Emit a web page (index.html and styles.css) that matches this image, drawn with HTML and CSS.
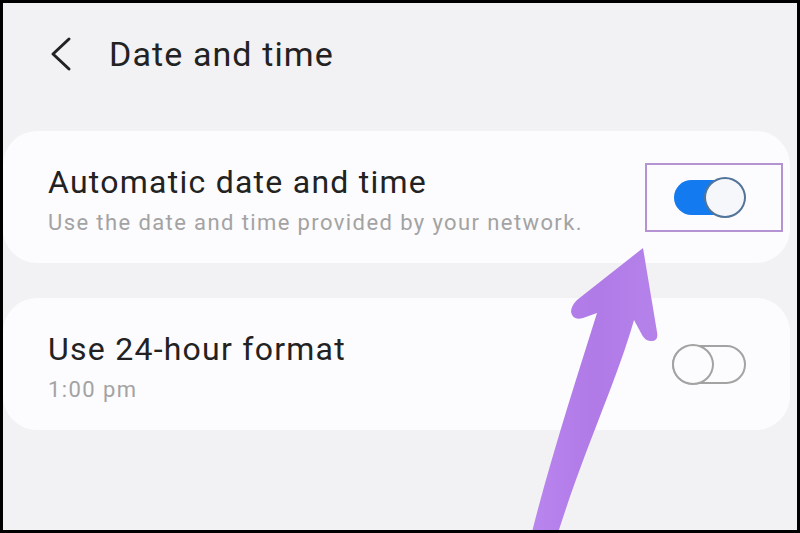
FILE: index.html
```html
<!DOCTYPE html>
<html lang="en">
<head>
    <meta charset="UTF-8">
    <meta name="viewport" content="width=device-width, initial-scale=1.0">
    <title>Date and time</title>
    <link rel="stylesheet" href="styles.css">
</head>
<body>

    <div class="frame">
        <div class="screen">

            <!-- Top bar -->
            <header class="top-bar">
                <svg class="back-icon" width="24" height="36" viewBox="0 0 24 36">
                    <polyline points="20,3 4,18 20,33" fill="none" stroke="#222" stroke-width="3" stroke-linecap="round" stroke-linejoin="round"/>
                </svg>
                <h1>Date and time</h1>
            </header>

            <!-- Settings -->
            <div class="settings">
                <div class="setting-card">
                    <div class="setting-text">
                        <h2>Automatic date and time</h2>
                        <p>Use the date and time provided by your network.</p>
                    </div>
                    <div class="switch-box highlighted">
                        <div class="switch on"></div>
                    </div>
                </div>

                <div class="setting-card">
                    <div class="setting-text">
                        <h2>Use 24-hour format</h2>
                        <p>1:00 pm</p>
                    </div>
                    <div class="switch-box">
                        <div class="switch"></div>
                    </div>
                </div>
            </div>

            <!-- Pointer arrow -->
            <svg class="pointer" width="800" height="533" viewBox="0 0 800 533">
                <defs>
                    <linearGradient id="arrow-fill" x1="0" y1="0" x2="1" y2="0">
                        <stop offset="0" stop-color="#b985ee"/>
                        <stop offset="0.5" stop-color="#b07ae7"/>
                        <stop offset="1" stop-color="#b582ea"/>
                    </linearGradient>
                </defs>
                <path d="M643 248 L657 332 Q659 342 650 341 Q644 340 641 333 L634 320 C617 380 584 450 557 536 L531 536 C550 460 576 380 597 313 L583 318 Q573 321 571 312 Q571 306 577 300 Z" fill="url(#arrow-fill)"/>
            </svg>

        </div>
    </div>

</body>
</html>
```

FILE: styles.css
```css
body {
    margin: 0;
    font-family: Roboto, "Noto Sans", Arial, sans-serif;
}

.frame {
    width: 800px;
    height: 533px;
    padding: 3px;
    box-sizing: border-box;
    background-color: #000;
}

.screen {
    position: relative;
    height: 100%;
    overflow: hidden;
    background-color: #f2f1f3;
}

.top-bar {
    display: flex;
    align-items: center;
    height: 102px;
    padding-left: 46px;
}

.back-icon {
    margin-right: 36px;
}

.top-bar h1 {
    margin: 0;
    font-size: 34px;
    font-weight: 400;
    letter-spacing: 1.1px;
    color: #222;
}

.settings {
    display: flex;
    flex-direction: column;
    gap: 35px;
    margin-top: 26px;
    padding-right: 7px;
}

.setting-card {
    display: flex;
    align-items: center;
    justify-content: space-between;
    height: 132px;
    padding: 0 7px 0 45px;
    background-color: #fcfbfd;
    border-radius: 34px;
}

.setting-text {
    padding-top: 4px;
}

.setting-text h2 {
    margin: 0;
    font-size: 32px;
    font-weight: 400;
    letter-spacing: 1.25px;
    color: #222;
}

.setting-text p {
    margin: 9px 0 0;
    font-size: 22px;
    letter-spacing: 1.4px;
    color: #a3a3a3;
}

.switch-box {
    padding: 12px 35px 12px 25px;
    border: 2px solid transparent;
}

.switch-box.highlighted {
    border-color: #b493d3;
}

.switch {
    position: relative;
    width: 74px;
    height: 41px;
}

.switch::before {
    content: "";
    position: absolute;
    left: 0;
    top: 1px;
    width: 74px;
    height: 39px;
    box-sizing: border-box;
    border: 2px solid #a3a3a3;
    border-radius: 20px;
}

.switch::after {
    content: "";
    position: absolute;
    left: 0;
    top: 0;
    width: 42px;
    height: 41px;
    box-sizing: border-box;
    border: 2px solid #a3a3a3;
    border-radius: 50%;
    background-color: #fcfbfd;
}

.switch.on::before {
    left: 2px;
    top: 3px;
    width: 62px;
    height: 35px;
    border: none;
    border-radius: 18px;
    background-color: #137bef;
}

.switch.on::after {
    left: 32px;
    border-color: #52749a;
    background-color: #f6f7fa;
}

.pointer {
    position: absolute;
    left: -3px;
    top: -3px;
}
```
